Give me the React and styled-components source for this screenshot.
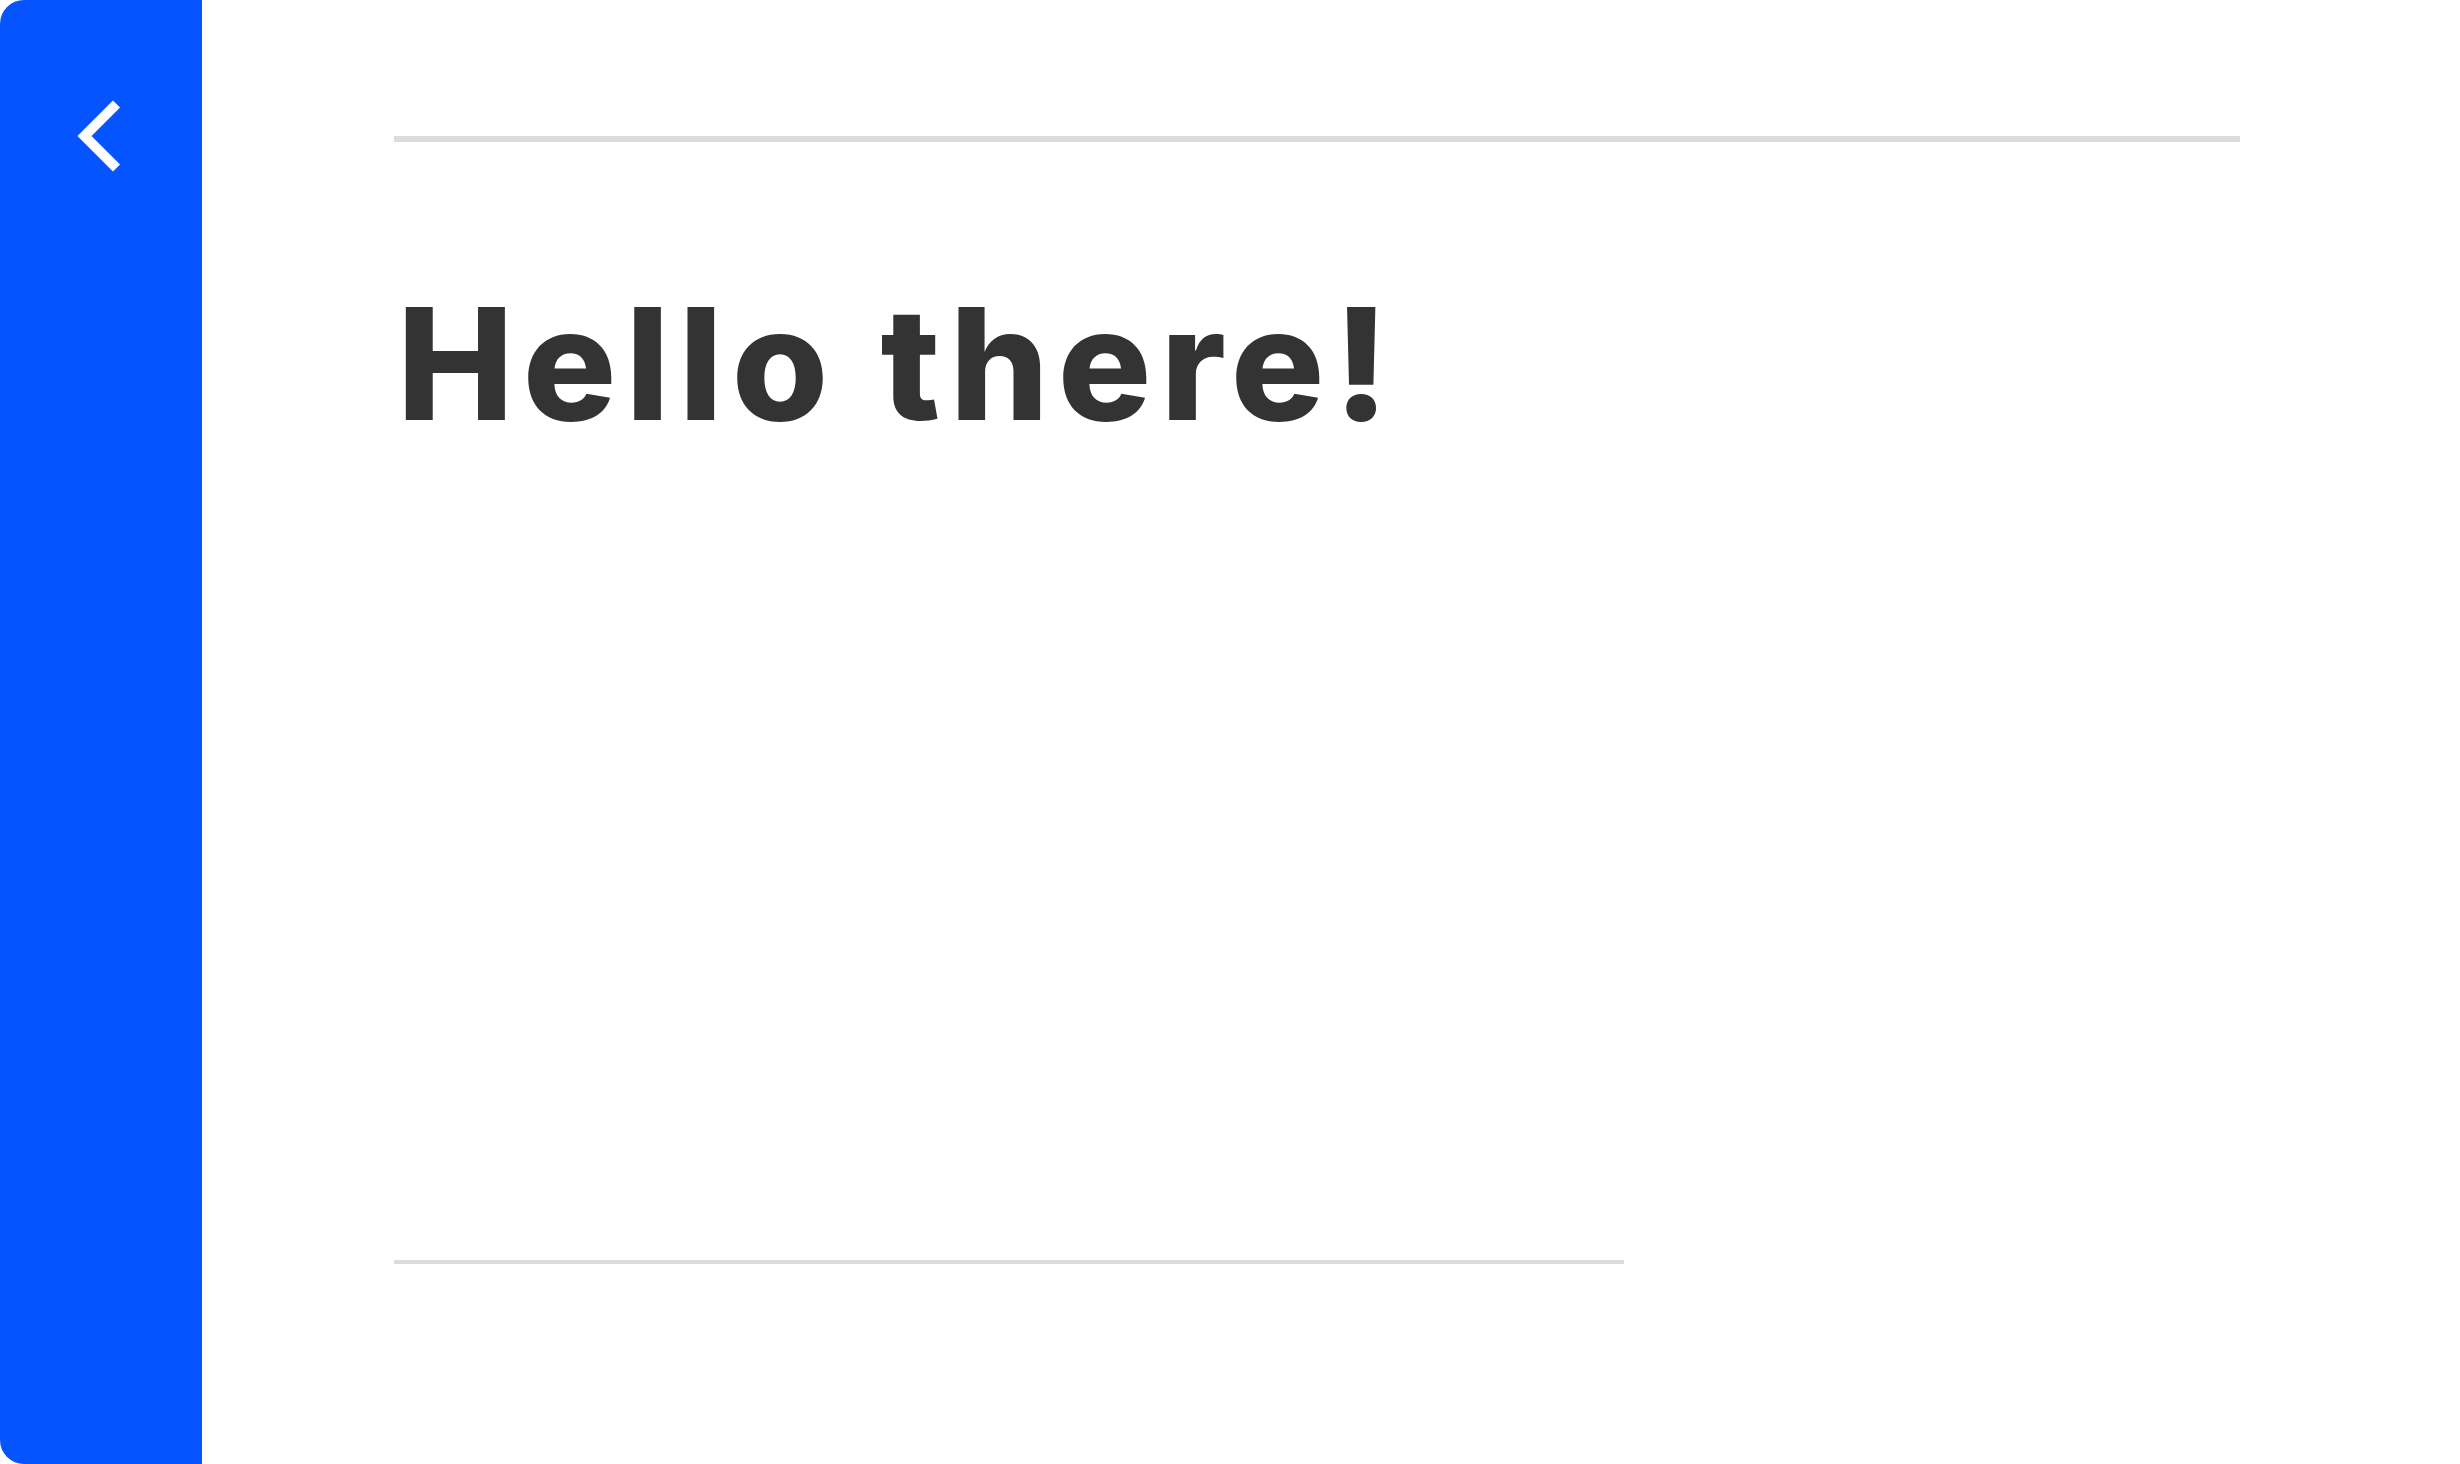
import React from 'react';
import styled, { createGlobalStyle } from 'styled-components';

const GlobalStyle = createGlobalStyle`
  html, body {
    margin: 0;
    padding: 0;
    background: #ffffff;
  }
  body {
    font-family: "Inter", "Liberation Sans", sans-serif;
  }
`;

const Page = styled.div`
  display: flex;
  height: 100vh;
  overflow: hidden;
`;

const Sidebar = styled.aside`
  flex: 0 0 202px;
  background: #0654ff;
  border-radius: 24px 0 0 24px;
  padding: 96px 0 0 72px;
  box-sizing: border-box;
`;

const BackButton = styled.button`
  display: block;
  padding: 0;
  border: 0;
  background: none;
  cursor: pointer;
  width: 52px;
  height: 80px;
`;

const Main = styled.main`
  flex: 1;
  display: flex;
  flex-direction: column;
  padding: 136px 0 200px 192px;
  box-sizing: border-box;
`;

const Rule = styled.div`
  width: ${(p) => p.$width}px;
  height: ${(p) => p.$thick}px;
  background: #dcdcdc;
  flex: 0 0 auto;
`;

const Heading = styled.h1`
  margin: 128px 0 0 3px;
  font-family: "Inter", "Liberation Sans", sans-serif;
  font-weight: 800;
  font-size: 156px;
  line-height: 1.2;
  color: #333333;
  letter-spacing: 9px;
`;

const Spacer = styled.div`
  flex: 1;
`;

function ChevronLeft() {
  return (
    <svg width="52" height="80" viewBox="0 0 52 80" fill="none">
      <polyline
        points="44.5,8 12.5,40 44.5,72"
        stroke="#ffffff"
        strokeWidth="10"
        strokeLinecap="butt"
        strokeLinejoin="miter"
      />
    </svg>
  );
}

export default function App() {
  return (
    <>
      <GlobalStyle />
      <Page>
        <Sidebar>
          <BackButton aria-label="Back">
            <ChevronLeft />
          </BackButton>
        </Sidebar>
        <Main>
          <Rule $width={1846} $thick={6} />
          <Heading>Hello there!</Heading>
          <Spacer />
          <Rule $width={1230} $thick={4} />
        </Main>
      </Page>
    </>
  );
}
